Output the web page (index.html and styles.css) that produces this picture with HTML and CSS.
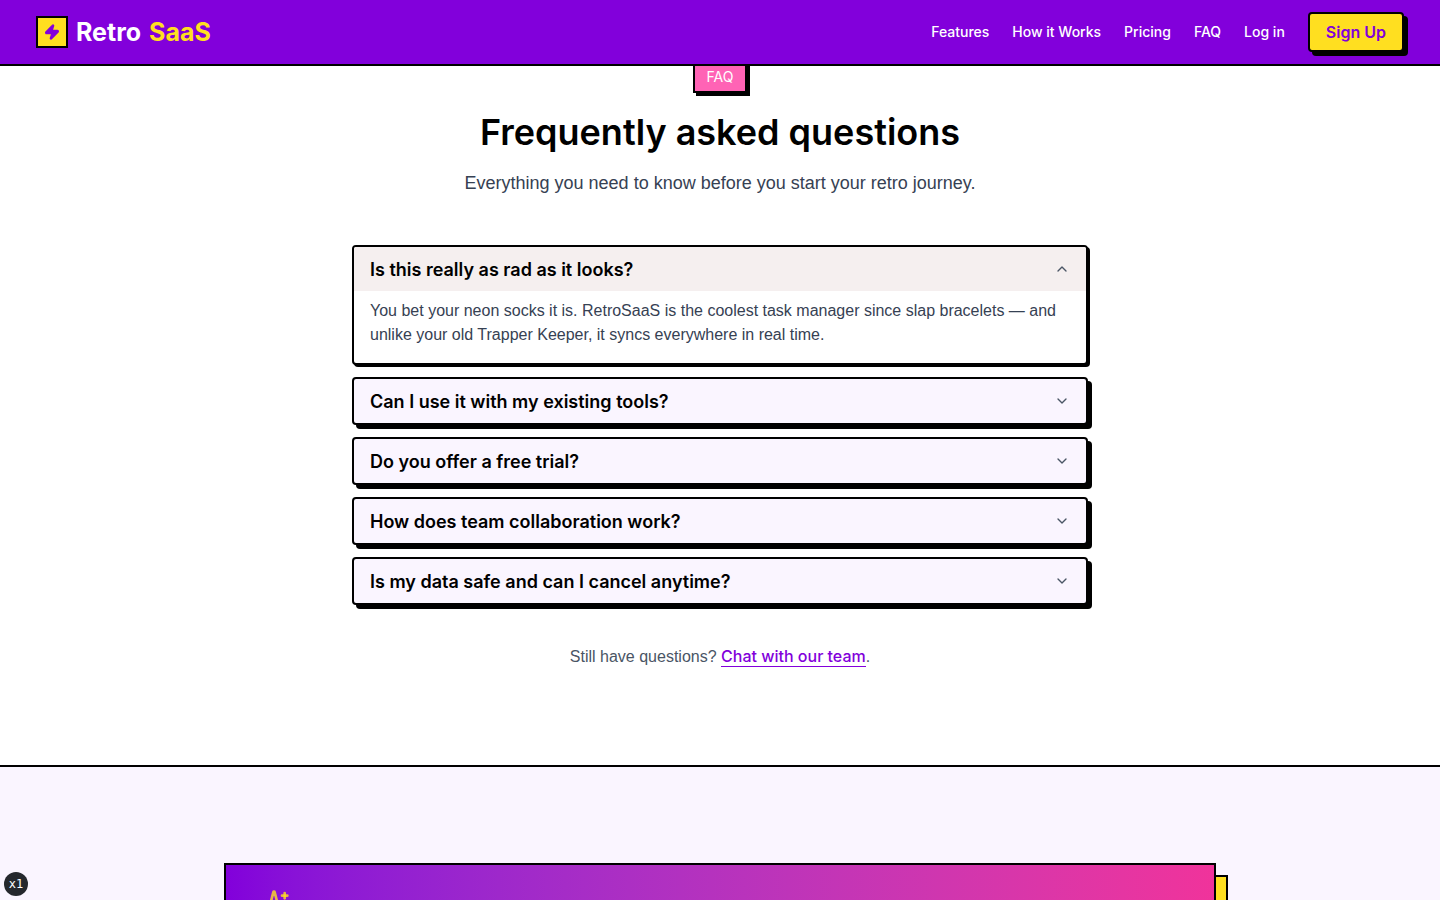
FILE: index.html
```
<!DOCTYPE html>
<html lang="en">
<head>
  <meta charset="UTF-8" />
  <meta name="viewport" content="width=device-width, initial-scale=1.0"/>
  <title>Retro SaaS</title>
  <link rel="stylesheet" href="styles.css">
</head>
<body>
  <header class="site-header">
    <a class="brand" href="#">
      <span class="brand-mark">
        <svg class="bolt" viewBox="0 0 24 24"><path d="M4 14a1 1 0 0 1-.78-1.63l9.9-10.2a.5.5 0 0 1 .86.46l-1.92 6.02A1 1 0 0 0 13 10h7a1 1 0 0 1 .78 1.63l-9.9 10.2a.5.5 0 0 1-.86-.46l1.92-6.02A1 1 0 0 0 11 14z"/></svg>
      </span>
      <span class="brand-name">Retro <span class="brand-accent">SaaS</span></span>
    </a>
    <nav class="nav">
      <a href="#features">Features</a>
      <a href="#how">How it Works</a>
      <a href="#pricing">Pricing</a>
      <a href="#faq">FAQ</a>
      <a href="#login">Log in</a>
      <button class="signup" type="button">Sign Up</button>
    </nav>
  </header>

  <main>
    <section class="faq" id="faq">
      <span class="tag">FAQ</span>
      <h2>Frequently asked questions</h2>
      <p class="lead">Everything you need to know before you start your retro journey.</p>

      <div class="accordion">
        <div class="item open">
          <button class="question" type="button" aria-expanded="true">
            Is this really as rad as it looks?
            <svg class="chevron" viewBox="0 0 24 24"><path d="m6 9 6 6 6-6"/></svg>
          </button>
          <p class="answer">You bet your neon socks it is. RetroSaaS is the coolest task manager since slap bracelets — and unlike your old Trapper Keeper, it syncs everywhere in real time.</p>
        </div>
        <div class="item">
          <button class="question" type="button" aria-expanded="false">
            Can I use it with my existing tools?
            <svg class="chevron" viewBox="0 0 24 24"><path d="m6 9 6 6 6-6"/></svg>
          </button>
        </div>
        <div class="item">
          <button class="question" type="button" aria-expanded="false">
            Do you offer a free trial?
            <svg class="chevron" viewBox="0 0 24 24"><path d="m6 9 6 6 6-6"/></svg>
          </button>
        </div>
        <div class="item">
          <button class="question" type="button" aria-expanded="false">
            How does team collaboration work?
            <svg class="chevron" viewBox="0 0 24 24"><path d="m6 9 6 6 6-6"/></svg>
          </button>
        </div>
        <div class="item">
          <button class="question" type="button" aria-expanded="false">
            Is my data safe and can I cancel anytime?
            <svg class="chevron" viewBox="0 0 24 24"><path d="m6 9 6 6 6-6"/></svg>
          </button>
        </div>
      </div>

      <p class="contact">Still have questions? <a href="#chat">Chat with our team</a>.</p>
    </section>

    <section class="cta">
      <div class="cta-card">
        <svg class="sparkles" viewBox="0 0 24 24">
          <path d="M9.937 15.5A2 2 0 0 0 8.5 14.063l-6.135-1.582a.5.5 0 0 1 0-.962L8.5 9.936A2 2 0 0 0 9.937 8.5l1.582-6.135a.5.5 0 0 1 .963 0L14.063 8.5A2 2 0 0 0 15.5 9.937l6.135 1.581a.5.5 0 0 1 0 .964L15.5 14.063a2 2 0 0 0-1.437 1.437l-1.582 6.135a.5.5 0 0 1-.963 0z"/>
          <path d="M20 3v4"/>
          <path d="M22 5h-4"/>
        </svg>
      </div>
    </section>
  </main>

  <div class="zoom-badge">x1</div>
</body>
</html>
```

FILE: styles.css
```
* {
  box-sizing: border-box;
}

body {
  margin: 0;
  font-family: Inter, "Liberation Sans", sans-serif;
  font-size: 16px;
  line-height: 24px;
  color: #000;
  background-color: #fff;
}

h2, p {
  margin: 0;
}

button {
  font-family: inherit;
  cursor: pointer;
}

svg {
  fill: none;
  stroke: currentColor;
  stroke-width: 2;
  stroke-linecap: round;
  stroke-linejoin: round;
}

/* header */
.site-header {
  position: fixed;
  top: 0;
  left: 0;
  right: 0;
  z-index: 10;
  display: flex;
  align-items: center;
  justify-content: space-between;
  height: 66px;
  padding: 0 36px;
  background-color: #8200db;
  border-bottom: 2px solid #000;
}

.brand {
  display: flex;
  align-items: center;
  gap: 8px;
  color: #fff;
  text-decoration: none;
}

.brand-mark {
  display: flex;
  align-items: center;
  justify-content: center;
  width: 32px;
  height: 32px;
  border: 2px solid #000;
  background-color: #ffdf20;
  color: #8200db;
}

.bolt {
  width: 16px;
  height: 16px;
  fill: currentColor;
  stroke-width: 3;
  overflow: visible;
}

.brand-name {
  display: flex;
  gap: 8px;
  font-size: 25px;
  line-height: 32px;
  font-weight: 700;
}

.brand-accent {
  color: #ffdf20;
}

.nav {
  display: flex;
  align-items: center;
  gap: 23px;
}

.nav a {
  font-size: 14px;
  font-weight: 500;
  color: #fff;
  text-decoration: none;
}

.signup {
  height: 40px;
  padding: 0 16px;
  border: 2px solid #000;
  border-radius: 4px;
  background-color: #ffdf20;
  box-shadow: 4px 4px 0 #000;
  color: #8200db;
  font-size: 16px;
  font-weight: 600;
}

/* faq */
.faq {
  display: flex;
  flex-direction: column;
  align-items: center;
  padding: 61px 24px 96px;
  border-bottom: 2px solid #000;
}

.tag {
  padding: 4px 12px;
  border: 2px solid #000;
  background-color: #ff63b5;
  box-shadow: 3px 3px 0 #000;
  color: #fff;
  font-size: 14px;
  line-height: 20px;
}

.faq h2 {
  margin-top: 18px;
  font-size: 36px;
  line-height: 42px;
  font-weight: 600;
}

.lead,
.answer,
.contact {
  font-family: "Liberation Sans", Arial, sans-serif;
}

.lead {
  margin-top: 16px;
  color: #364153;
  font-size: 18px;
  line-height: 28px;
}

.accordion {
  display: flex;
  flex-direction: column;
  gap: 12px;
  width: 100%;
  max-width: 736px;
  margin-top: 48px;
}

.item {
  border: 2px solid #000;
  border-radius: 4px;
  background-color: #faf5ff;
  box-shadow: 4px 4px 0 #000;
  overflow: hidden;
}

.item.open {
  background-color: #fff;
  box-shadow: 2px 2px 0 #000;
}

.question {
  display: flex;
  align-items: center;
  justify-content: space-between;
  width: 100%;
  height: 44px;
  padding: 0 16px;
  border: none;
  background: none;
  color: #000;
  font-size: 18px;
  font-weight: 600;
  text-align: left;
}

.open .question {
  background-color: #f5efef;
}

.chevron {
  width: 16px;
  height: 16px;
  color: #4a5565;
}

.open .chevron {
  transform: rotate(180deg);
}

.answer {
  padding: 8px 16px 16px;
  color: #364153;
}

.contact {
  margin-top: 40px;
  color: #4a5565;
}

.contact a {
  border-bottom: 1px solid #8200db;
  color: #8200db;
  font-family: Inter, sans-serif;
  line-height: 20px;
  font-weight: 500;
  text-decoration: none;
}

/* call to action */
.cta {
  padding: 96px 24px;
  background-color: #faf5ff;
}

.cta-card {
  max-width: 992px;
  min-height: 320px;
  margin: 0 auto;
  padding: 24px 32px;
  border: 2px solid #000;
  background-image: linear-gradient(to right in oklab, #8200db, #f0339b);
  box-shadow: 12px 12px 0 -2px #ffdf20, 12px 12px 0 #000;
}

.sparkles {
  width: 32px;
  height: 32px;
  color: rgba(255, 223, 32, 0.8);
}

.zoom-badge {
  position: fixed;
  left: 4px;
  bottom: 4px;
  width: 24px;
  height: 24px;
  border-radius: 50%;
  background-color: #25282d;
  color: #fff;
  font-family: "DejaVu Sans Mono", monospace;
  font-size: 12px;
  line-height: 24px;
  text-align: center;
}
```
